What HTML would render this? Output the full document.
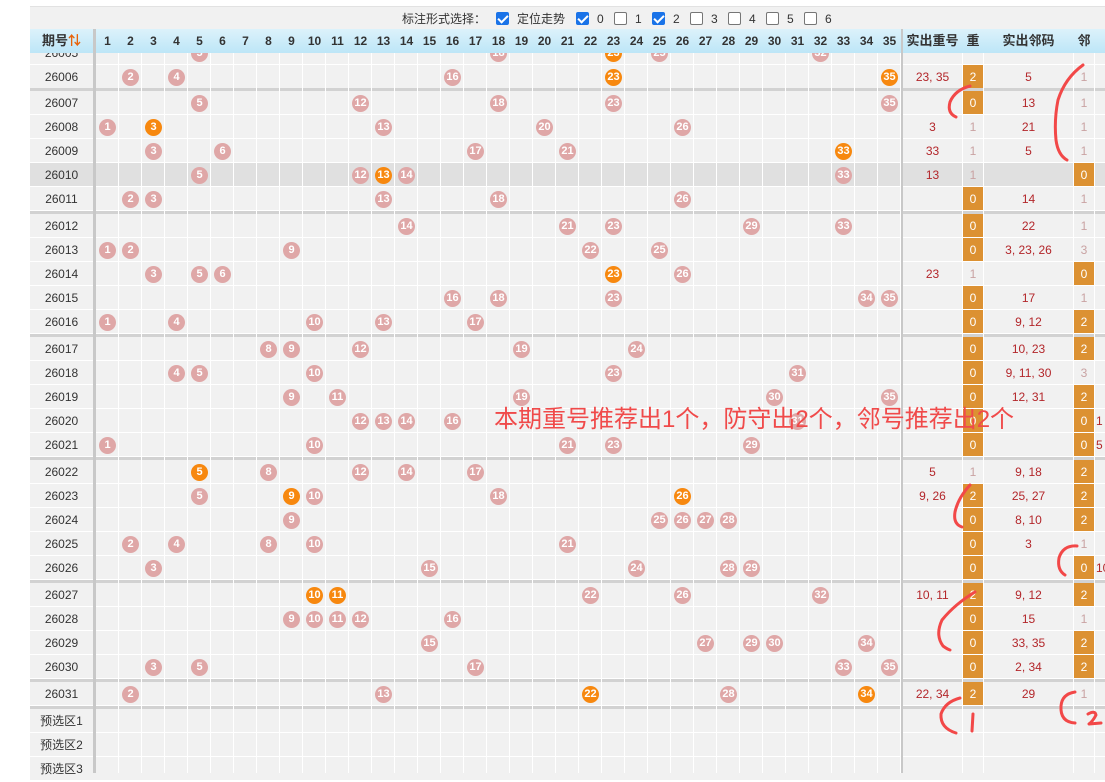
<!DOCTYPE html>
<html><head><meta charset="utf-8">
<style>
*{margin:0;padding:0;box-sizing:border-box}
body{width:1105px;height:773px;overflow:hidden;background:#fff;position:relative;font-family:"Liberation Sans","Noto Sans CJK SC",sans-serif}
.top{position:absolute;left:30px;top:6px;width:1075px;height:23px;background:#f1f1f1;border-top:1px solid #e2e2e2}
.tl{position:absolute;top:4px;font-size:12px;color:#333;height:16px;line-height:16px}
.cb{position:absolute;top:5px;width:13px;height:13px;border:1px solid #767676;border-radius:2px;background:#fff}
.cb.on{background:#1a73e8;border-color:#1a73e8}
.cb.on:after{content:"";position:absolute;left:3px;top:0px;width:4px;height:8px;border:solid #fff;border-width:0 2px 2px 0;transform:rotate(45deg)}
.hd{position:absolute;left:30px;top:29px;width:1075px;height:24px;background:linear-gradient(#dcf2fb,#bde6f7);z-index:5}
.h{position:absolute;top:0;height:24px;line-height:24px;text-align:center;font-weight:bold;font-size:12px;color:#333}
.r{position:absolute;left:0;width:1105px;height:24px;margin-top:1px;border-bottom:1px solid #fff;background:linear-gradient(to right,#fff 30px,#f1f1f1 30px)}
.r.hl{background:linear-gradient(to right,#fff 30px,#e0e0e0 30px)}
.p{position:absolute;left:30px;width:63px;top:0;height:23px;line-height:25px;text-align:center;font-size:12px;color:#333}
.sep{position:absolute;left:30px;width:1075px;height:3px;margin-top:1px;background:#d2d2d2}
.b{position:absolute;top:4px;width:17px;height:17px;border-radius:50%;background:#dfa7a7;color:#fff;font-weight:bold;font-size:11px;line-height:17px;text-align:center;font-style:normal;z-index:3}
.b.o{background:#f7880f}
.x{position:absolute;top:0;height:23px;line-height:25px;text-align:center;font-size:12px;color:#b3262a;z-index:3}
.s1{left:903px;width:59px}.s2{left:963px;width:20px}.s3{left:984px;width:89px}.s4{left:1074px;width:20px}.s5{left:1096px;width:10px;text-align:left}
.bx{background:#dc9132;color:#fff}
.pl{color:#c9a2a2}
.vl{position:absolute;top:29px;height:744px;z-index:2;pointer-events:none}
.ann{position:absolute;left:494px;top:399px;font-size:24px;color:#f04a4a;z-index:8;white-space:nowrap;letter-spacing:0px}
svg{position:absolute;left:0;top:0;z-index:9}
</style></head><body>
<div class="top">
<span class="tl" style="left:372px">标注形式选择：</span>
<i class="cb on" style="left:466px"></i><span class="tl" style="left:487px">定位走势</span>
<i class="cb on" style="left:546px"></i><span class="tl" style="left:567px">0</span>
<i class="cb" style="left:584px"></i><span class="tl" style="left:605px">1</span>
<i class="cb on" style="left:622px"></i><span class="tl" style="left:643px">2</span>
<i class="cb" style="left:660px"></i><span class="tl" style="left:681px">3</span>
<i class="cb" style="left:698px"></i><span class="tl" style="left:719px">4</span>
<i class="cb" style="left:736px"></i><span class="tl" style="left:757px">5</span>
<i class="cb" style="left:774px"></i><span class="tl" style="left:795px">6</span>
</div>
<div class="hd">
<span class="h" style="left:0;width:63px;font-size:13px">期号<span style="color:#e8630a">⇅</span></span>
<span class="h" style="left:66px;width:23px">1</span><span class="h" style="left:89px;width:23px">2</span><span class="h" style="left:112px;width:23px">3</span><span class="h" style="left:135px;width:23px">4</span><span class="h" style="left:158px;width:23px">5</span><span class="h" style="left:181px;width:23px">6</span><span class="h" style="left:204px;width:23px">7</span><span class="h" style="left:227px;width:23px">8</span><span class="h" style="left:250px;width:23px">9</span><span class="h" style="left:273px;width:23px">10</span><span class="h" style="left:296px;width:23px">11</span><span class="h" style="left:319px;width:23px">12</span><span class="h" style="left:342px;width:23px">13</span><span class="h" style="left:365px;width:23px">14</span><span class="h" style="left:388px;width:23px">15</span><span class="h" style="left:411px;width:23px">16</span><span class="h" style="left:434px;width:23px">17</span><span class="h" style="left:457px;width:23px">18</span><span class="h" style="left:480px;width:23px">19</span><span class="h" style="left:503px;width:23px">20</span><span class="h" style="left:526px;width:23px">21</span><span class="h" style="left:549px;width:23px">22</span><span class="h" style="left:572px;width:23px">23</span><span class="h" style="left:595px;width:23px">24</span><span class="h" style="left:618px;width:23px">25</span><span class="h" style="left:641px;width:23px">26</span><span class="h" style="left:664px;width:23px">27</span><span class="h" style="left:687px;width:23px">28</span><span class="h" style="left:710px;width:23px">29</span><span class="h" style="left:733px;width:23px">30</span><span class="h" style="left:756px;width:23px">31</span><span class="h" style="left:779px;width:23px">32</span><span class="h" style="left:802px;width:23px">33</span><span class="h" style="left:825px;width:23px">34</span><span class="h" style="left:848px;width:23px">35</span>
<span class="h" style="left:873px;width:59px;font-size:13px">实出重号</span><span class="h" style="left:933px;width:20px;font-size:13px">重</span><span class="h" style="left:954px;width:89px;font-size:13px">实出邻码</span><span class="h" style="left:1044px;width:20px;font-size:13px">邻</span>
</div>

<div class="vl" style="left:96px;width:805px;background:repeating-linear-gradient(to right,transparent 0 22px,#fff 22px 23px)"></div>
<div class="vl" style="left:93px;width:3px;background:#c8c8c8;z-index:6"></div>
<div class="vl" style="left:901px;width:2px;background:#c8c8c8;z-index:6"></div>
<div class="vl" style="left:962px;width:1px;background:#fff"></div>
<div class="vl" style="left:983px;width:1px;background:#fff"></div>
<div class="vl" style="left:1073px;width:1px;background:#fff"></div>
<div class="vl" style="left:1094px;width:1px;background:#fff"></div>

<div class="r" style="top:40px"><span class="p">26005</span><i class="b" style="left:191px">5</i><i class="b" style="left:490px">18</i><i class="b o" style="left:605px">23</i><i class="b" style="left:651px">25</i><i class="b" style="left:812px">32</i></div>
<div class="r" style="top:64px"><span class="p">26006</span><i class="b" style="left:122px">2</i><i class="b" style="left:168px">4</i><i class="b" style="left:444px">16</i><i class="b o" style="left:605px">23</i><i class="b o" style="left:881px">35</i><span class="x s1">23, 35</span><span class="x s2 bx">2</span><span class="x s3">5</span><span class="x s4 pl">1</span></div>
<div class="sep" style="top:87px"></div>
<div class="r" style="top:90px"><span class="p">26007</span><i class="b" style="left:191px">5</i><i class="b" style="left:352px">12</i><i class="b" style="left:490px">18</i><i class="b" style="left:605px">23</i><i class="b" style="left:881px">35</i><span class="x s2 bx">0</span><span class="x s3">13</span><span class="x s4 pl">1</span></div>
<div class="r" style="top:114px"><span class="p">26008</span><i class="b" style="left:99px">1</i><i class="b o" style="left:145px">3</i><i class="b" style="left:375px">13</i><i class="b" style="left:536px">20</i><i class="b" style="left:674px">26</i><span class="x s1">3</span><span class="x s2 pl">1</span><span class="x s3">21</span><span class="x s4 pl">1</span></div>
<div class="r" style="top:138px"><span class="p">26009</span><i class="b" style="left:145px">3</i><i class="b" style="left:214px">6</i><i class="b" style="left:467px">17</i><i class="b" style="left:559px">21</i><i class="b o" style="left:835px">33</i><span class="x s1">33</span><span class="x s2 pl">1</span><span class="x s3">5</span><span class="x s4 pl">1</span></div>
<div class="r hl" style="top:162px"><span class="p">26010</span><i class="b" style="left:191px">5</i><i class="b" style="left:352px">12</i><i class="b o" style="left:375px">13</i><i class="b" style="left:398px">14</i><i class="b" style="left:835px">33</i><span class="x s1">13</span><span class="x s2 pl">1</span><span class="x s4 bx">0</span></div>
<div class="r" style="top:186px"><span class="p">26011</span><i class="b" style="left:122px">2</i><i class="b" style="left:145px">3</i><i class="b" style="left:375px">13</i><i class="b" style="left:490px">18</i><i class="b" style="left:674px">26</i><span class="x s2 bx">0</span><span class="x s3">14</span><span class="x s4 pl">1</span></div>
<div class="sep" style="top:210px"></div>
<div class="r" style="top:213px"><span class="p">26012</span><i class="b" style="left:398px">14</i><i class="b" style="left:559px">21</i><i class="b" style="left:605px">23</i><i class="b" style="left:743px">29</i><i class="b" style="left:835px">33</i><span class="x s2 bx">0</span><span class="x s3">22</span><span class="x s4 pl">1</span></div>
<div class="r" style="top:237px"><span class="p">26013</span><i class="b" style="left:99px">1</i><i class="b" style="left:122px">2</i><i class="b" style="left:283px">9</i><i class="b" style="left:582px">22</i><i class="b" style="left:651px">25</i><span class="x s2 bx">0</span><span class="x s3">3, 23, 26</span><span class="x s4 pl">3</span></div>
<div class="r" style="top:261px"><span class="p">26014</span><i class="b" style="left:145px">3</i><i class="b" style="left:191px">5</i><i class="b" style="left:214px">6</i><i class="b o" style="left:605px">23</i><i class="b" style="left:674px">26</i><span class="x s1">23</span><span class="x s2 pl">1</span><span class="x s4 bx">0</span></div>
<div class="r" style="top:285px"><span class="p">26015</span><i class="b" style="left:444px">16</i><i class="b" style="left:490px">18</i><i class="b" style="left:605px">23</i><i class="b" style="left:858px">34</i><i class="b" style="left:881px">35</i><span class="x s2 bx">0</span><span class="x s3">17</span><span class="x s4 pl">1</span></div>
<div class="r" style="top:309px"><span class="p">26016</span><i class="b" style="left:99px">1</i><i class="b" style="left:168px">4</i><i class="b" style="left:306px">10</i><i class="b" style="left:375px">13</i><i class="b" style="left:467px">17</i><span class="x s2 bx">0</span><span class="x s3">9, 12</span><span class="x s4 bx">2</span></div>
<div class="sep" style="top:333px"></div>
<div class="r" style="top:336px"><span class="p">26017</span><i class="b" style="left:260px">8</i><i class="b" style="left:283px">9</i><i class="b" style="left:352px">12</i><i class="b" style="left:513px">19</i><i class="b" style="left:628px">24</i><span class="x s2 bx">0</span><span class="x s3">10, 23</span><span class="x s4 bx">2</span></div>
<div class="r" style="top:360px"><span class="p">26018</span><i class="b" style="left:168px">4</i><i class="b" style="left:191px">5</i><i class="b" style="left:306px">10</i><i class="b" style="left:605px">23</i><i class="b" style="left:789px">31</i><span class="x s2 bx">0</span><span class="x s3">9, 11, 30</span><span class="x s4 pl">3</span></div>
<div class="r" style="top:384px"><span class="p">26019</span><i class="b" style="left:283px">9</i><i class="b" style="left:329px">11</i><i class="b" style="left:513px">19</i><i class="b" style="left:766px">30</i><i class="b" style="left:881px">35</i><span class="x s2 bx">0</span><span class="x s3">12, 31</span><span class="x s4 bx">2</span></div>
<div class="r" style="top:408px"><span class="p">26020</span><i class="b" style="left:352px">12</i><i class="b" style="left:375px">13</i><i class="b" style="left:398px">14</i><i class="b" style="left:444px">16</i><i class="b" style="left:789px">31</i><span class="x s2 bx">0</span><span class="x s4 bx">0</span><span class="x s5">1</span></div>
<div class="r" style="top:432px"><span class="p">26021</span><i class="b" style="left:99px">1</i><i class="b" style="left:306px">10</i><i class="b" style="left:559px">21</i><i class="b" style="left:605px">23</i><i class="b" style="left:743px">29</i><span class="x s2 bx">0</span><span class="x s4 bx">0</span><span class="x s5">5</span></div>
<div class="sep" style="top:456px"></div>
<div class="r" style="top:459px"><span class="p">26022</span><i class="b o" style="left:191px">5</i><i class="b" style="left:260px">8</i><i class="b" style="left:352px">12</i><i class="b" style="left:398px">14</i><i class="b" style="left:467px">17</i><span class="x s1">5</span><span class="x s2 pl">1</span><span class="x s3">9, 18</span><span class="x s4 bx">2</span></div>
<div class="r" style="top:483px"><span class="p">26023</span><i class="b" style="left:191px">5</i><i class="b o" style="left:283px">9</i><i class="b" style="left:306px">10</i><i class="b" style="left:490px">18</i><i class="b o" style="left:674px">26</i><span class="x s1">9, 26</span><span class="x s2 bx">2</span><span class="x s3">25, 27</span><span class="x s4 bx">2</span></div>
<div class="r" style="top:507px"><span class="p">26024</span><i class="b" style="left:283px">9</i><i class="b" style="left:651px">25</i><i class="b" style="left:674px">26</i><i class="b" style="left:697px">27</i><i class="b" style="left:720px">28</i><span class="x s2 bx">0</span><span class="x s3">8, 10</span><span class="x s4 bx">2</span></div>
<div class="r" style="top:531px"><span class="p">26025</span><i class="b" style="left:122px">2</i><i class="b" style="left:168px">4</i><i class="b" style="left:260px">8</i><i class="b" style="left:306px">10</i><i class="b" style="left:559px">21</i><span class="x s2 bx">0</span><span class="x s3">3</span><span class="x s4 pl">1</span></div>
<div class="r" style="top:555px"><span class="p">26026</span><i class="b" style="left:145px">3</i><i class="b" style="left:421px">15</i><i class="b" style="left:628px">24</i><i class="b" style="left:720px">28</i><i class="b" style="left:743px">29</i><span class="x s2 bx">0</span><span class="x s4 bx">0</span><span class="x s5">10</span></div>
<div class="sep" style="top:579px"></div>
<div class="r" style="top:582px"><span class="p">26027</span><i class="b o" style="left:306px">10</i><i class="b o" style="left:329px">11</i><i class="b" style="left:582px">22</i><i class="b" style="left:674px">26</i><i class="b" style="left:812px">32</i><span class="x s1">10, 11</span><span class="x s2 bx">2</span><span class="x s3">9, 12</span><span class="x s4 bx">2</span></div>
<div class="r" style="top:606px"><span class="p">26028</span><i class="b" style="left:283px">9</i><i class="b" style="left:306px">10</i><i class="b" style="left:329px">11</i><i class="b" style="left:352px">12</i><i class="b" style="left:444px">16</i><span class="x s2 bx">0</span><span class="x s3">15</span><span class="x s4 pl">1</span></div>
<div class="r" style="top:630px"><span class="p">26029</span><i class="b" style="left:421px">15</i><i class="b" style="left:697px">27</i><i class="b" style="left:743px">29</i><i class="b" style="left:766px">30</i><i class="b" style="left:858px">34</i><span class="x s2 bx">0</span><span class="x s3">33, 35</span><span class="x s4 bx">2</span></div>
<div class="r" style="top:654px"><span class="p">26030</span><i class="b" style="left:145px">3</i><i class="b" style="left:191px">5</i><i class="b" style="left:467px">17</i><i class="b" style="left:835px">33</i><i class="b" style="left:881px">35</i><span class="x s2 bx">0</span><span class="x s3">2, 34</span><span class="x s4 bx">2</span></div>
<div class="sep" style="top:678px"></div>
<div class="r" style="top:681px"><span class="p">26031</span><i class="b" style="left:122px">2</i><i class="b" style="left:375px">13</i><i class="b o" style="left:582px">22</i><i class="b" style="left:720px">28</i><i class="b o" style="left:858px">34</i><span class="x s1">22, 34</span><span class="x s2 bx">2</span><span class="x s3">29</span><span class="x s4 pl">1</span></div>
<div class="sep" style="top:705px"></div>
<div class="r" style="top:708px"><span class="p">预选区1</span></div>
<div class="r" style="top:732px"><span class="p">预选区2</span></div>
<div class="r" style="top:756px"><span class="p">预选区3</span></div>

<div class="ann">本期重号推荐出1个，防守出2个，邻号推荐出2个</div>

<svg width="1105" height="773" fill="none" stroke="#f24848" stroke-width="3" stroke-linecap="round" stroke-linejoin="round">
<path d="M970 86 Q955 90 950 102 Q947 113 956 117"/>
<path d="M1083 65 Q1065 78 1058 100 Q1054 120 1056 140 Q1058 155 1067 160"/>
<path d="M970 485 Q958 498 955 512 Q953 524 962 527"/>
<path d="M1077 546 Q1063 545 1059 558 Q1057 570 1065 575"/>
<path d="M975 592 Q955 604 942 620 Q935 635 943 646 Q947 649 950 650"/>
<path d="M960 698 Q945 702 941 714 Q940 728 956 733"/>
<path d="M973 714 L972 731"/>
<path d="M1075 692 Q1062 694 1061 706 Q1060 722 1075 723"/>
<path d="M1088 714 Q1095 710 1096 715 Q1093 721 1089 724 L1101 723"/>
</svg>
</body></html>
